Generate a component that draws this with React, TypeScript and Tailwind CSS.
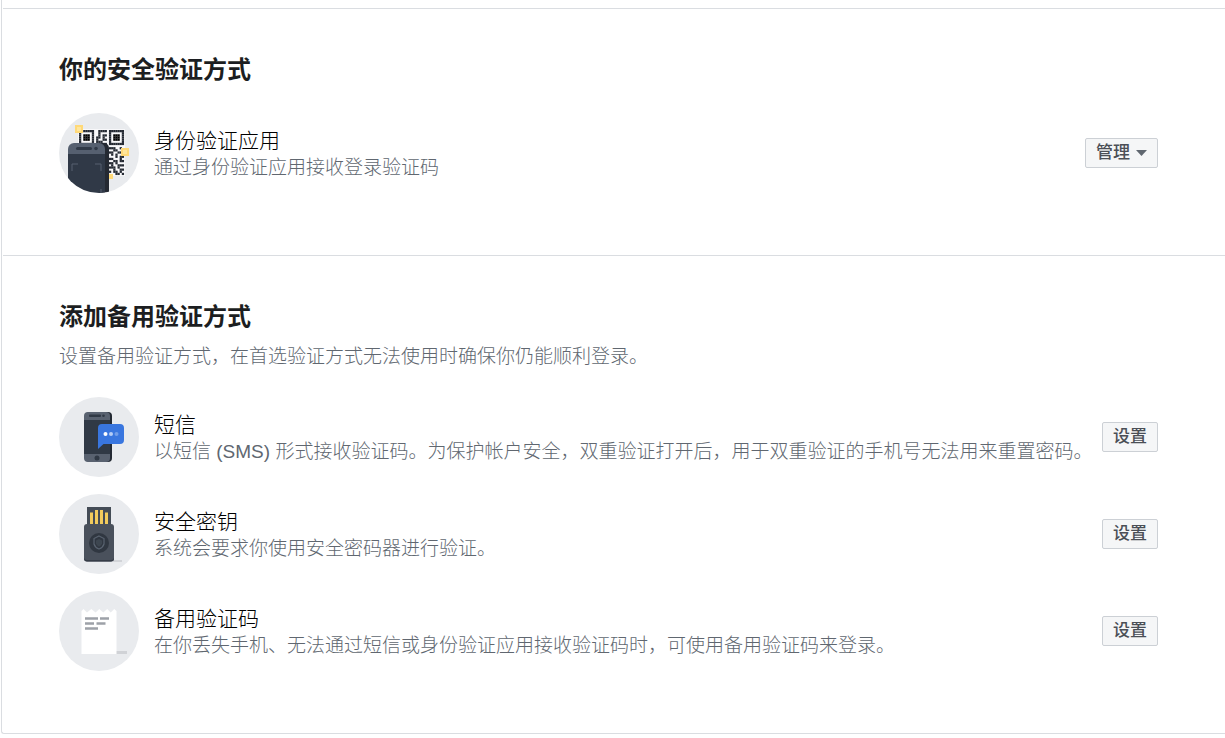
import type { ReactNode } from "react";

const qrModules = [
  "1111111..1111.1111111",
  "1.....1..1....1.....1",
  "1.111.1..1.11.1.111.1",
  "1.111.1.11.1..1.111.1",
  "1.111.1.1..11.1.111.1",
  "1.....1.111...1.....1",
  "1111111.1.111.1111111",
  "..........1..........",
  "1.1..11.1..11.111..1.",
  ".11..1..1.111...11..1",
  "1..11.1..1.1.111..11.",
  "1.1..11.1..11..1.1..1",
  ".1.11...1.11.1...1.11",
  "1.11.11..1.11.11...1.",
  "11.1.1..1.1..1..11.11",
  ".1.11.1..11.1.11.1...",
  "1.1..1.11..1.1.1..111",
  ".1.1.11..11.1.111.1..",
  "1.11..1.1.1.11..1..11",
  ".11.1..11..1.11.11.1.",
  "1.1.11.1..11.1...11.1",
];

function Disc({ children }: { children: ReactNode }) {
  return (
    <svg className="size-20 shrink-0" viewBox="0 0 80 80" aria-hidden="true">
      <circle cx="40" cy="40" r="40" fill="#e9ebee" />
      {children}
    </svg>
  );
}

function AppIcon() {
  return (
    <Disc>
      <clipPath id="disc">
        <circle cx="40" cy="40" r="40" />
      </clipPath>
      <rect x="19" y="16" width="47" height="47" fill="#f8f8fa" />
      <g transform="translate(20 17) scale(2.14)">
        {qrModules.map((row, y) =>
          row.split("").map((cell, x) =>
            cell === "1" ? (
              <rect key={`${x}-${y}`} x={x} y={y} width="1.05" height="1.05" fill={y > 1 && y < 5 && ((x > 1 && x < 5) || (x > 15 && x < 19)) ? "#000" : "#252a33"} />
            ) : null
          )
        )}
      </g>
      <rect x="16" y="12" width="8" height="8" fill="#ffd978" />
      <rect x="18" y="14" width="4" height="4" fill="#ffe69d" />
      <rect x="62" y="35" width="8" height="8" fill="#ffd978" />
      <rect x="64" y="37" width="4" height="4" fill="#ffe69d" />
      <rect x="48" y="61" width="6" height="5" fill="#ffd978" />
      <g clipPath="url(#disc)">
        <path d="M40 30h5a5 5 0 0 1 5 5v45H40z" fill="#242932" />
        <path d="M9 41v-5a6 6 0 0 1 6-6h25a6 6 0 0 1 6 6v5z" fill="#566070" />
        <path d="M9 41h37v39H9z" fill="#303947" />
        <rect x="17" y="34" width="16" height="3" rx="1.5" fill="#303947" />
        <circle cx="37" cy="35.5" r="1.8" fill="#303947" />
        <path d="M13 58v-7h6M36 51h6v7M42 76v4" fill="none" stroke="#566070" strokeWidth="1" />
      </g>
    </Disc>
  );
}

function SmsIcon() {
  return (
    <Disc>
      <rect x="27" y="15" width="26" height="50" rx="4" fill="#242a33" />
      <rect x="25" y="15" width="26" height="50" rx="4" fill="#596270" />
      <path d="M25 23h26v34H25z" fill="#303945" />
      <rect x="30" y="17.5" width="12" height="2.500" rx="1" fill="#303945" />
      <circle cx="44.5" cy="18.700" r="1.300" fill="#303945" />
      <circle cx="38" cy="61" r="2.5" fill="#303945" />
      <path d="M43 27h18a4 4 0 0 1 4 4v12a4 4 0 0 1-4 4H44.500l-5.500 5V31a4 4 0 0 1 4-4z" fill="#3976df" />
      <circle cx="46.500" cy="37" r="2" fill="#fff" />
      <circle cx="52" cy="37" r="2" fill="#b5cdf6" />
      <circle cx="57.500" cy="37" r="2" fill="#729ee9" />
    </Disc>
  );
}

function KeyIcon() {
  return (
    <Disc>
      <path d="M54 66h9v2h-9z" fill="#d2d4d8" />
      <path d="M28 13h24v20H28z" fill="#444c56" />
      <path d="M31 18.500h3v12h-3zM36 16h3v14.500h-3zM41 16h3v14.500h-3zM46 18.500h3v12h-3z" fill="#f2cb5c" />
      <rect x="25" y="30" width="30" height="37.500" rx="3" fill="#4a515c" />
      <path d="M25 64v.500a3 3 0 0 0 3 3h24a3 3 0 0 0 3-3v-.500a3 3 0 0 1-3 2H28a3 3 0 0 1-3-2z" fill="#363d48" />
      <circle cx="40" cy="49" r="10" fill="#303741" />
      <path d="m40 42 5 2.500v5.500q-1 3.500-5 5-4-1.500-5-5v-5.500z" fill="none" stroke="#596370" strokeWidth="1.200" />
      <path d="m40 45 3 1.500v3q-.5 2-3 3.200-2.500-1.200-3-3.200v-3z" fill="#3d4650" />
    </Disc>
  );
}

function CodesIcon() {
  return (
    <Disc>
      <path d="M57 60h11v3H57z" fill="#d0d2d6" />
      <path d="M22.500 20l2-2 3.500 3.500 4.300-3.500 4.300 3.500 3.700-3.500 4 3.500 3.900-3.500 3.500 3.500 3.500-3.500 2.300 2v43h-35z" fill="#fff" />
      <path d="M26 27.500h13M41 27.500h9M26 32.500h9M37.500 32.500h9M26 37.500h13" stroke="#9da1a8" strokeWidth="2.500" />
    </Disc>
  );
}

function Method({ icon, title, text, manage = false }: { icon: ReactNode; title: string; text: string; manage?: boolean }) {
  return (
    <li className="flex items-center">
      {icon}
      <div className="ml-[15px] min-w-0 flex-1 pt-1">
        <h3 className="text-[21px] leading-[26px] font-light whitespace-nowrap text-black">{title}</h3>
        <p className="text-[19px] leading-7 font-light whitespace-nowrap text-[#606770]">{text}</p>
      </div>
      <button
        type="button"
        aria-label={`${manage ? "管理" : "设置"} ${title}`}
        className="flex h-[30px] shrink-0 items-center gap-1.5 rounded-[2px] border border-[#ccd0d5] bg-[#f5f6f7] px-2.5 text-[17px] font-medium text-[#4b4f56]"
      >
        {manage ? "管理" : "设置"}
        {manage && (
          <svg className="h-1.5 w-[11px]" viewBox="0 0 11 6" aria-hidden="true">
            <path d="M0 0h11L5.500 6z" fill="#606770" />
          </svg>
        )}
      </button>
    </li>
  );
}

export default function App() {
  return (
    <main className="bg-white font-['Liberation_Sans','Noto_Sans_CJK_SC',sans-serif]" lang="zh-CN">
      <div className="ml-px rounded-bl-[3px] border-b border-l border-[#dadde1] pt-2">
        <section className="ml-px border-t border-[#dadde1] pt-[46px] pr-[67px] pb-[62px] pl-14">
          <h2 className="text-2xl leading-[30px] font-bold text-[#1c1e21]">你的安全验证方式</h2>
          <ul className="mt-7">
            <Method icon={<AppIcon />} title="身份验证应用" text="通过身份验证应用接收登录验证码" manage />
          </ul>
        </section>
        <section className="ml-px border-t border-[#dadde1] pt-[46px] pr-[67px] pb-[62px] pl-14">
          <h2 className="text-2xl leading-[30px] font-bold text-[#1c1e21]">添加备用验证方式</h2>
          <p className="mt-3 text-[19px] leading-[26px] font-light text-[#606770]">
            设置备用验证方式，在首选验证方式无法使用时确保你仍能顺利登录。
          </p>
          <ul className="mt-[27px] flex flex-col gap-[17px]">
            <Method icon={<SmsIcon />} title="短信" text="以短信 (SMS) 形式接收验证码。为保护帐户安全，双重验证打开后，用于双重验证的手机号无法用来重置密码。" />
            <Method icon={<KeyIcon />} title="安全密钥" text="系统会要求你使用安全密码器进行验证。" />
            <Method icon={<CodesIcon />} title="备用验证码" text="在你丢失手机、无法通过短信或身份验证应用接收验证码时，可使用备用验证码来登录。" />
          </ul>
        </section>
      </div>
    </main>
  );
}
